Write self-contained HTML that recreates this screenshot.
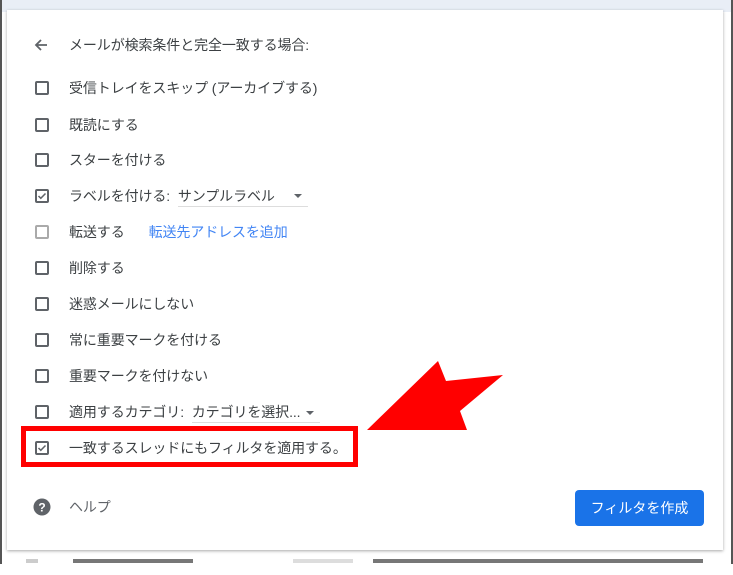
<!DOCTYPE html>
<html><head><meta charset="utf-8"><style>
*{margin:0;padding:0;box-sizing:border-box}
body{width:733px;height:564px;overflow:hidden;background:#fff;position:relative;font-family:"Liberation Sans","Noto Sans CJK JP",sans-serif;color:#3c4043;font-size:14px}
.topbg{position:absolute;left:0;top:0;width:733px;height:12px;background:#e9eef6}
.lb{position:absolute;left:0;top:0;width:2px;height:564px;background:#555}
.rb{position:absolute;right:0;top:0;width:2px;height:564px;background:#555}
.dlg{position:absolute;left:7px;top:10px;width:716px;height:540px;background:#fff;box-shadow:0 1px 3px rgba(0,0,0,.35)}
.row{position:absolute;left:69px;height:20px;line-height:20px;white-space:nowrap;letter-spacing:-0.1px}
.cb{position:absolute;left:35px;width:14px;height:14px;border:2px solid #5f6368;border-radius:2px}
.cb.dim{border-color:#aaa}
.cb svg{position:absolute;left:0;top:0}
.sel{display:inline-block;border-bottom:1px solid #ddd;margin-left:4px;padding-right:6px;position:relative}
.tri{display:inline-block;width:0;height:0;border-left:4px solid transparent;border-right:4px solid transparent;border-top:4px solid #5f6368;vertical-align:middle;margin-left:10px}
.btn{position:absolute;left:575px;top:490px;width:129px;height:36px;background:#1a73e8;border-radius:4px;color:#fff;text-align:center;line-height:36px;font-size:14px}
.red{position:absolute;left:21px;top:426px;width:337px;height:41px;border:5px solid #f00}
.bot{position:absolute;left:26px;top:559px;height:6px;width:700px}
.bot span{display:inline-block;height:4px;vertical-align:top}
</style></head><body>
<div class="topbg"></div>
<div class="dlg"></div>
<div class="lb"></div><div class="rb"></div>
<svg style="position:absolute;left:33px;top:37px" width="16" height="16" viewBox="0 0 16 16"><path d="M14 8H3M8 3L3 8l5 5" stroke="#5f6368" stroke-width="1.8" fill="none"/></svg>
<div class="row" style="top:35px">メールが検索条件と完全一致する場合:</div>

<div class="cb" style="top:81px"></div><div class="row" style="top:78px">受信トレイをスキップ (アーカイブする)</div>
<div class="cb" style="top:118px"></div><div class="row" style="top:115px">既読にする</div>
<div class="cb" style="top:153px"></div><div class="row" style="top:150px">スターを付ける</div>
<div class="cb" style="top:189px"><svg width="10" height="10" viewBox="0 0 10 10"><path d="M1.5 5l2.3 2.3L8.5 2.5" stroke="#5f6368" stroke-width="1.5" fill="none"/></svg></div>
<div class="row" style="top:186px">ラベルを付ける: <span class="sel" style="width:130px">サンプルラベル<span class="tri" style="position:absolute;right:6px;top:8px"></span></span></div>
<div class="cb dim" style="top:225px"></div><div class="row" style="top:222px">転送する<span style="color:#4285f4;margin-left:24px">転送先アドレスを追加</span></div>
<div class="cb" style="top:261px"></div><div class="row" style="top:258px">削除する</div>
<div class="cb" style="top:297px"></div><div class="row" style="top:294px">迷惑メールにしない</div>
<div class="cb" style="top:333px"></div><div class="row" style="top:330px">常に重要マークを付ける</div>
<div class="cb" style="top:369px"></div><div class="row" style="top:366px">重要マークを付けない</div>
<div class="cb" style="top:405px"></div><div class="row" style="top:402px">適用するカテゴリ: <span class="sel">カテゴリを選択...<span class="tri" style="margin-left:6px"></span></span></div>
<div class="cb" style="top:441px"><svg width="10" height="10" viewBox="0 0 10 10"><path d="M1.5 5l2.3 2.3L8.5 2.5" stroke="#5f6368" stroke-width="1.5" fill="none"/></svg></div>
<div class="row" style="top:438px">一致するスレッドにもフィルタを適用する。</div>
<div class="red"></div>
<svg style="position:absolute;left:0;top:0" width="733" height="564"><polygon points="367,430 438,361 446,381 503,375 460,411 467,430" fill="#f00"/></svg>

<svg style="position:absolute;left:33px;top:498px" width="18" height="18" viewBox="0 0 18 18"><circle cx="9" cy="9" r="8.5" fill="#5f6368"/><text x="9" y="13.5" font-size="12" font-weight="bold" fill="#fff" text-anchor="middle" font-family="Liberation Sans">?</text></svg>
<div class="row" style="top:497px;color:#5f6368">ヘルプ</div>
<div class="btn">フィルタを作成</div>
<div class="bot"><span style="width:12px;background:#ccc;margin-right:35px"></span><span style="width:120px;background:#777;margin-right:100px"></span><span style="width:60px;background:#ddd;margin-right:20px"></span><span style="width:330px;background:#777"></span></div>
</body></html>
